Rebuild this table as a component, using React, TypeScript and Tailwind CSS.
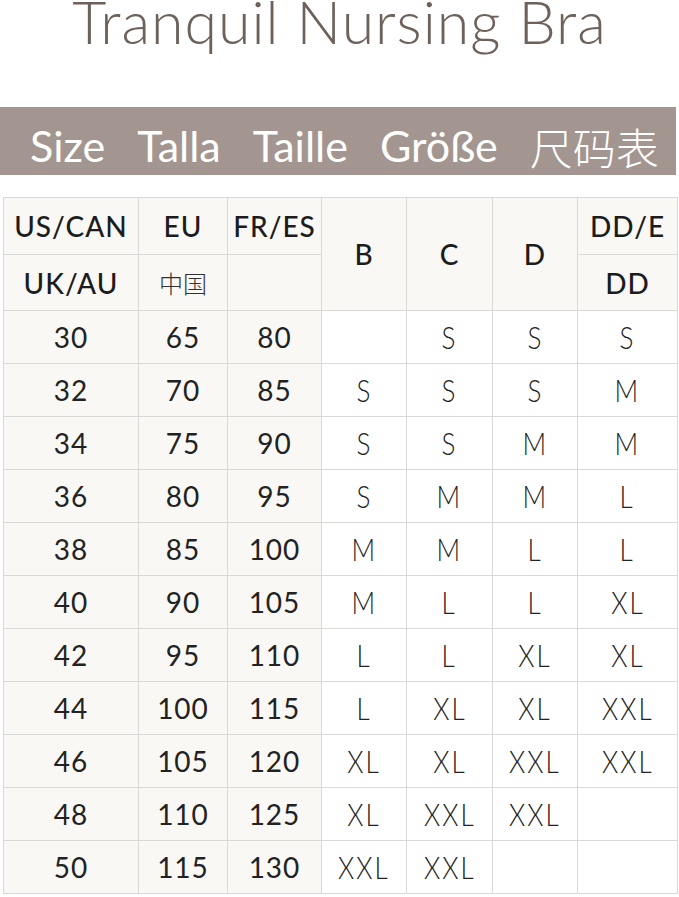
import React from 'react';

type Row = [string, string, string, string, string, string, string];

const rows: Row[] = [
  ['30', '65', '80', '', 'S', 'S', 'S'],
  ['32', '70', '85', 'S', 'S', 'S', 'M'],
  ['34', '75', '90', 'S', 'S', 'M', 'M'],
  ['36', '80', '95', 'S', 'M', 'M', 'L'],
  ['38', '85', '100', 'M', 'M', 'L', 'L'],
  ['40', '90', '105', 'M', 'L', 'L', 'XL'],
  ['42', '95', '110', 'L', 'L', 'XL', 'XL'],
  ['44', '100', '115', 'L', 'XL', 'XL', 'XXL'],
  ['46', '105', '120', 'XL', 'XL', 'XXL', 'XXL'],
  ['48', '110', '125', 'XL', 'XXL', 'XXL', ''],
  ['50', '115', '130', 'XXL', 'XXL', '', ''],
];

const cell = 'border border-[#d9d9d7] text-center align-middle p-0';
const shaded = `${cell} bg-[#f9f8f5]`;
const head = `${shaded} text-[28px] font-medium tracking-[1px] text-[#1c1c1c]`;
const num = `${shaded} text-[28px] font-normal tracking-[1px] text-[#222]`;
const cup = `${cell} bg-white text-[31px] font-light tracking-[2.4px] text-[#222]`;

function Cup({ v }: { v: string }) {
  return (
    <td className={cup}>
      <span className="inline-block scale-x-[0.84]">{v}</span>
    </td>
  );
}

export default function App() {
  return (
    <div className="w-[679px] h-[897px] bg-white overflow-hidden font-['Lato','Noto_Sans',sans-serif]">
      <h1 className="h-[43px] leading-[43px] text-center text-[59px] font-light text-[#6d615a] tracking-[1px]">
        Tranquil Nursing Bra
      </h1>

      <div className="mt-[64px] w-[676px] h-[68px] bg-[#a39690] flex items-start pt-[11px] pl-[30px] gap-[32px] text-white text-[43px] leading-[56px]">
        <span>Size</span>
        <span>Talla</span>
        <span>Taille</span>
        <span>Größe</span>
        <span className="font-light font-['Noto_Sans_CJK_SC',sans-serif]">尺码表</span>
      </div>

      <table className="mt-[22px] ml-[3px] w-[674px] table-fixed border-collapse">
        <colgroup>
          <col className="w-[135px]" />
          <col className="w-[89px]" />
          <col className="w-[94px]" />
          <col className="w-[85px]" />
          <col className="w-[86px]" />
          <col className="w-[85px]" />
          <col className="w-[100px]" />
        </colgroup>
        <thead>
          <tr className="h-[57px]">
            <th className={head}>US/CAN</th>
            <th className={head}>EU</th>
            <th className={head}>FR/ES</th>
            <th rowSpan={2} className={head}>B</th>
            <th rowSpan={2} className={head}>C</th>
            <th rowSpan={2} className={head}>D</th>
            <th className={head}>DD/E</th>
          </tr>
          <tr className="h-[56px]">
            <th className={head}>UK/AU</th>
            <th className={`${shaded} text-[24px] font-light text-[#333] font-['Noto_Sans_CJK_SC',sans-serif]`}>中国</th>
            <th className={shaded}></th>
            <th className={head}>DD</th>
          </tr>
        </thead>
        <tbody>
          {rows.map((r) => (
            <tr key={r[0]} className="h-[53px]">
              <td className={num}>{r[0]}</td>
              <td className={num}>{r[1]}</td>
              <td className={num}>{r[2]}</td>
              <Cup v={r[3]} />
              <Cup v={r[4]} />
              <Cup v={r[5]} />
              <Cup v={r[6]} />
            </tr>
          ))}
        </tbody>
      </table>
    </div>
  );
}
